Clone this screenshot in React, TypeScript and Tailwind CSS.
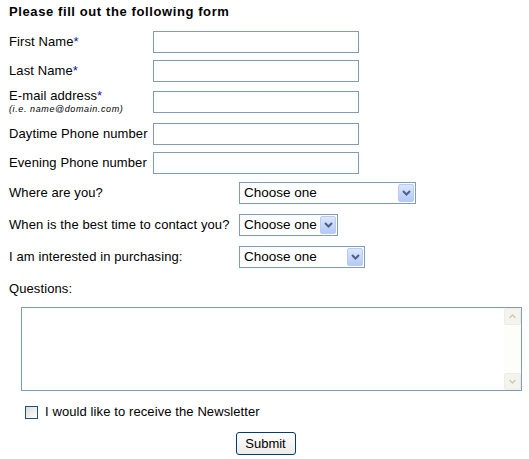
import React from "react";

const font = { fontFamily: '"Liberation Sans", Arial, sans-serif' };

function Req() {
  return <span className="text-[#1414a0]">*</span>;
}

function TextRow({ label, hint, className = "" }: { label: React.ReactNode; hint?: string; className?: string }) {
  return (
    <div className={`flex items-center h-[22px] ${className}`}>
      <div className="w-[144px] leading-[14px] tracking-[0.1px]">
        <div>{label}</div>
        {hint && <div className="text-[9px] italic tracking-[0.6px] leading-[11px] mt-[1px]">{hint}</div>}
      </div>
      <input type="text" className="w-[206px] h-[22px] border border-[#7f9db9] bg-white outline-none" />
    </div>
  );
}

function SelectRow({ label, width, className = "" }: { label: string; width: string; className?: string }) {
  return (
    <div className={`flex items-center h-[22px] ${className}`}>
      <div className="w-[230px] tracking-[0.1px]">{label}</div>
      <div className={`relative h-[22px] ${width}`}>
        <select className="appearance-none w-full h-full border border-[#7f9db9] bg-white pl-[4px] text-[13.5px] outline-none" style={font}>
          <option>Choose one</option>
        </select>
        <div className="absolute right-[2px] top-[2px] w-[16px] h-[18px] rounded-[2px] border border-[#b8cbf5] bg-gradient-to-b from-[#dce6fd] to-[#b5c9f7] flex items-center justify-center pointer-events-none">
          <svg width="9" height="6" viewBox="0 0 9 6">
            <path d="M1 1 L4.5 4.5 L8 1" fill="none" stroke="#4d6185" strokeWidth="2" />
          </svg>
        </div>
      </div>
    </div>
  );
}

export default function App() {
  return (
    <div className="w-[529px] h-[459px] bg-white text-black text-[13px] pl-[9px] pt-[4px]" style={font}>
      <h1 className="font-bold text-[13px] tracking-[0.6px] leading-[16px]">Please fill out the following form</h1>

      <TextRow className="mt-[11px]" label={<>First Name<Req /></>} />
      <TextRow className="mt-[7px]" label={<>Last Name<Req /></>} />
      <TextRow className="mt-[9px]" label={<>E-mail address<Req /></>} hint="(i.e. name@domain.com)" />
      <TextRow className="mt-[10px]" label="Daytime Phone number" />
      <TextRow className="mt-[7px]" label="Evening Phone number" />

      <SelectRow className="mt-[8px]" label="Where are you?" width="w-[177px]" />
      <SelectRow className="mt-[10px]" label="When is the best time to contact you?" width="w-[99px]" />
      <SelectRow className="mt-[10px]" label="I am interested in purchasing:" width="w-[126px]" />

      <div className="mt-[13px] leading-[15px] tracking-[0.1px]">Questions:</div>

      <div className="ml-[12px] mt-[11px] w-[501px] h-[84px] border border-[#7f9db9] flex">
        <textarea className="flex-1 resize-none outline-none bg-white" />
        <div className="w-[17px] bg-[#fdfdfa] flex flex-col justify-between">
          <div className="h-[17px] border border-[#eeede5] bg-[#f4f3ee] rounded-[2px] flex items-center justify-center">
            <svg width="7" height="5" viewBox="0 0 7 5">
              <path d="M0.5 4 L3.5 1 L6.5 4" fill="none" stroke="#c9c7ba" strokeWidth="1.3" />
            </svg>
          </div>
          <div className="h-[17px] border border-[#eeede5] bg-[#f4f3ee] rounded-[2px] flex items-center justify-center">
            <svg width="7" height="5" viewBox="0 0 7 5">
              <path d="M0.5 1 L3.5 4 L6.5 1" fill="none" stroke="#c9c7ba" strokeWidth="1.3" />
            </svg>
          </div>
        </div>
      </div>

      <label className="flex items-center ml-[16px] mt-[14px] h-[14px]">
        <span className="w-[13px] h-[13px] border border-[#1c5180] bg-gradient-to-br from-[#dcdcd7] to-[#ffffff] inline-block" />
        <span className="ml-[7px] tracking-[0.1px]">I would like to receive the Newsletter</span>
      </label>

      <div className="mt-[13px] flex justify-center pr-[9px]">
        <button className="w-[60px] h-[23px] border border-[#003c74] rounded-[3px] bg-gradient-to-b from-[#ffffff] to-[#ecebe6] text-[13px] leading-none ml-[2px]" style={font}>
          Submit
        </button>
      </div>
    </div>
  );
}
